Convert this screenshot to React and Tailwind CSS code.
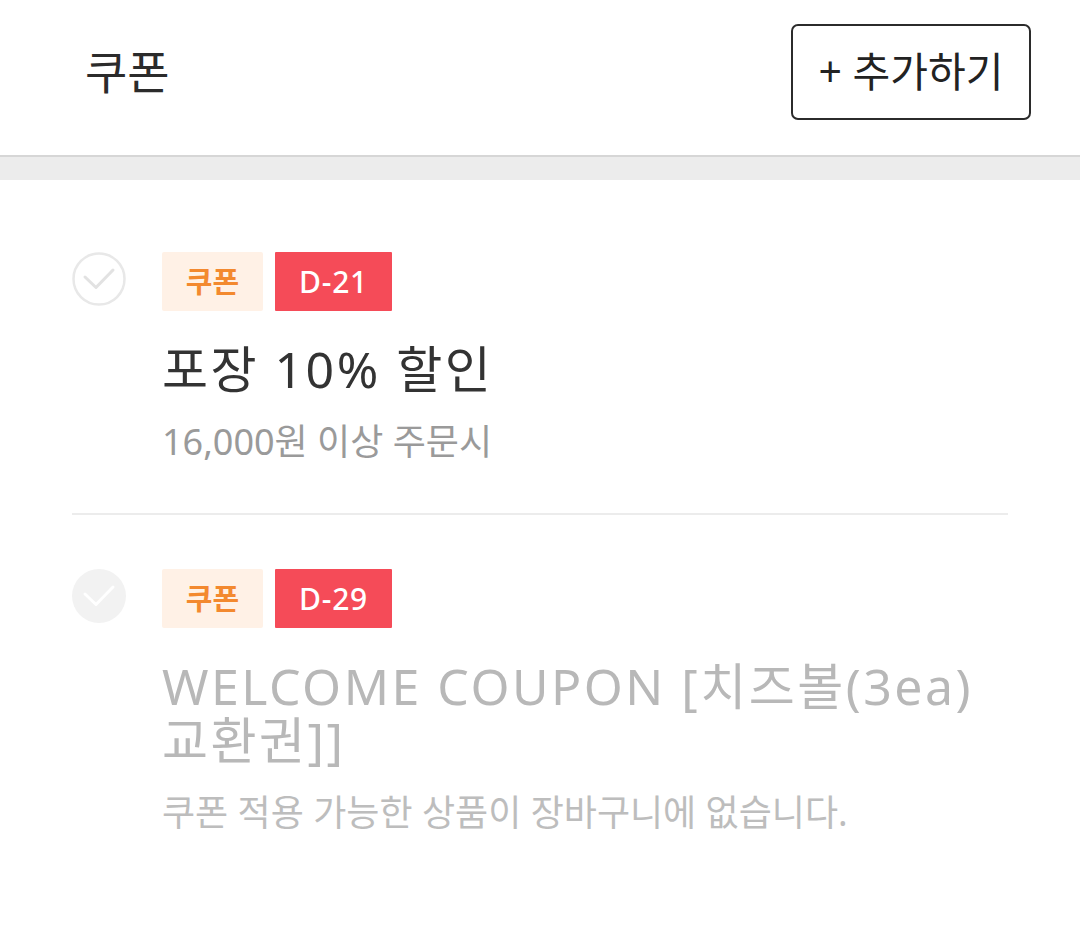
import React from "react";

const font = { fontFamily: '"Noto Sans", "Noto Sans CJK KR", sans-serif' };

const CheckCircle = ({ filled }) => (
  <svg viewBox="0 0 54 54" width="54" height="54" className="shrink-0">
    {filled ? (
      <circle cx="27" cy="27" r="27" fill="#f2f2f2" />
    ) : (
      <circle cx="27" cy="27" r="25.5" fill="none" stroke="#e8e8e8" strokeWidth="2.5" />
    )}
    <path
      d="M13 25 L24 35.5 L41 18"
      fill="none"
      stroke={filled ? "#ffffff" : "#e2e2e2"}
      strokeWidth="3"
      strokeLinecap="round"
      strokeLinejoin="round"
    />
  </svg>
);

const CouponItem = ({ dday, title, desc, disabled }) => (
  <div className="flex gap-9">
    <CheckCircle filled={disabled} />
    <div className="flex min-w-0 flex-1 flex-col">
      <div className="flex gap-3">
        <span className="flex h-[59px] w-[101px] items-center justify-center rounded-[2px] bg-[#fff1e6] text-[29px] font-bold text-[#f3892f]">
          쿠폰
        </span>
        <span className="flex h-[59px] items-center justify-center rounded-[1px] bg-[#f54b58] px-[24px] text-[30px] font-medium tracking-[0.8px] text-white">
          {dday}
        </span>
      </div>
      <p
        className={`mt-[31px] break-keep text-[50px] leading-[54px] tracking-[2.5px] ${
          disabled ? "text-[#b8b8b8]" : "text-[#333333]"
        }`}
      >
        {title}
      </p>
      <p
        className={`mt-[26px] break-keep text-[36px] leading-[40px] ${
          disabled ? "text-[#bdbdbd]" : "text-[#9a9a9a]"
        }`}
      >
        {desc}
      </p>
    </div>
  </div>
);

export default function App() {
  return (
    <div className="min-h-[930px] w-[1080px] bg-white" style={font}>
      <header className="flex h-[155px] items-center justify-between pb-[12px] pl-[85px] pr-[49px]">
        <h1 className="text-[46px] text-[#2b2b2b]">쿠폰</h1>
        <button className="flex h-[96px] w-[240px] items-center justify-center rounded-[7px] border-2 border-[#2b2b2b] text-[41px] text-[#222]">
          + 추가하기
        </button>
      </header>
      <div className="h-[25px] border-t-2 border-[#d6d6d6] bg-[#ececec]" />
      <div className="px-[72px] pt-[72px]">
        <CouponItem dday="D-21" title="포장 10% 할인" desc="16,000원 이상 주문시" />
        <div className="mb-[54px] mt-[51px] h-[2px] bg-[#ececec]" />
        <CouponItem
          dday="D-29"
          title="WELCOME COUPON [치즈볼(3ea) 교환권]]"
          desc="쿠폰 적용 가능한 상품이 장바구니에 없습니다."
          disabled
        />
      </div>
    </div>
  );
}
